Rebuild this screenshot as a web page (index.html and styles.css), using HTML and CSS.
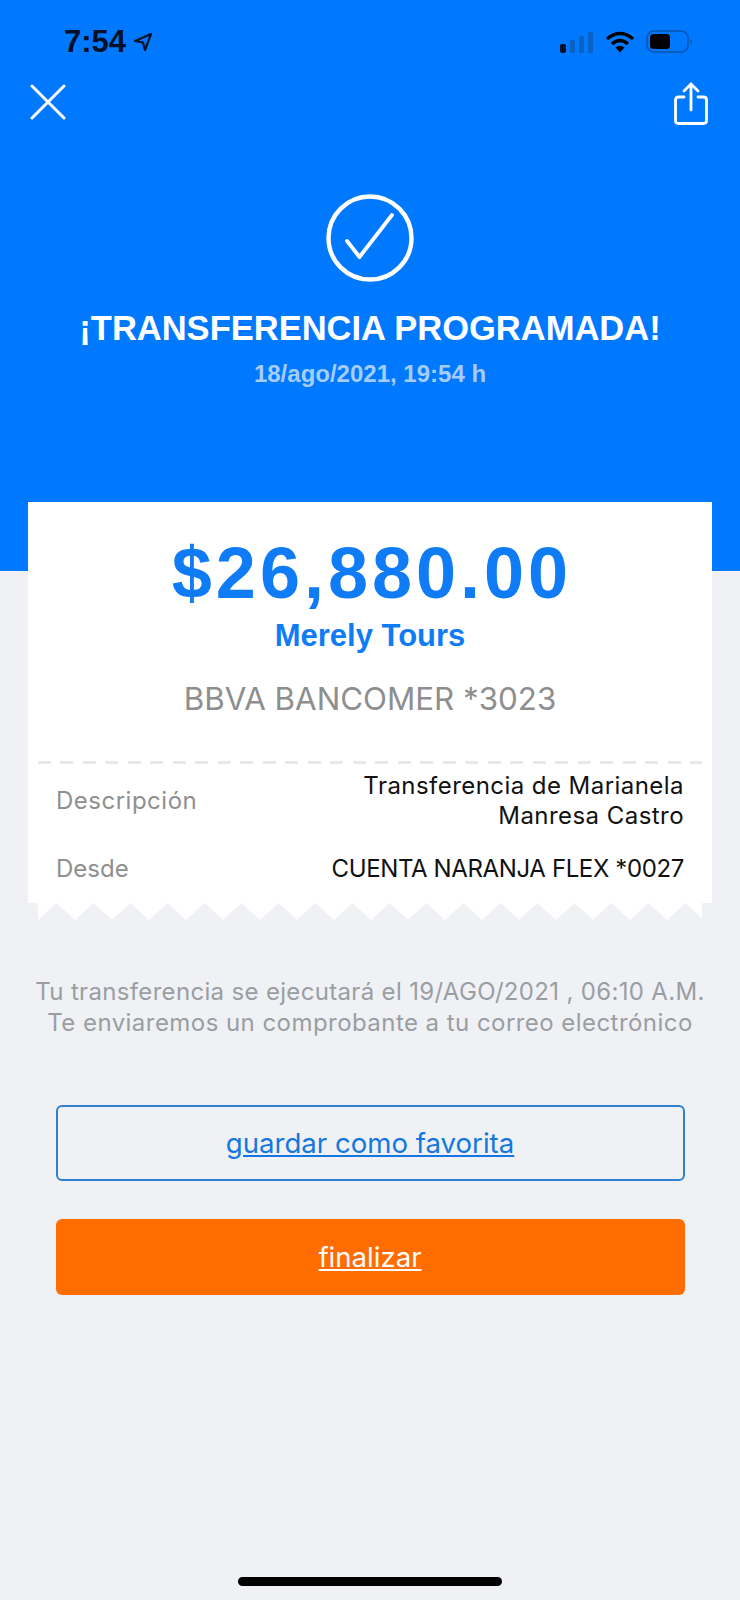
FILE: index.html
```html
<html>
  <head>
    <meta name="viewport" content="width=device-width, initial-scale=1.0">
    <link rel="stylesheet" href="styles.css">
  </head>
  <body>
    <div class="hero">
      <div class="statusBar">
        <div class="clock">
          <span>7:54</span>
          <svg class="arrowIcon" width="20" height="20" viewBox="0 0 20 20">
            <path d="M18 2 L2 9 L10 10.5 L12 18 Z" fill="none" stroke="#04102a" stroke-width="2.2" stroke-linejoin="round"/>
          </svg>
        </div>
        <div class="statusIcons">
          <svg width="34" height="22" viewBox="0 0 34 22">
            <rect x="0" y="13" width="6" height="9" rx="2" fill="#04102a"/>
            <rect x="10" y="9" width="5" height="13" rx="1.5" fill="#0a62c4"/>
            <rect x="19" y="5" width="5" height="17" rx="1.5" fill="#0a62c4"/>
            <rect x="28" y="1" width="5" height="21" rx="1.5" fill="#0a62c4"/>
          </svg>
          <svg width="30" height="22" viewBox="0 0 30 22">
            <path d="M2 8 Q15 -3 28 8" fill="none" stroke="#000" stroke-width="3.4"/>
            <path d="M7 13 Q15 6 23 13" fill="none" stroke="#000" stroke-width="3.4"/>
            <path d="M10.5 16.5 L15 21.5 L19.5 16.5 Q15 13 10.5 16.5 Z" fill="#000"/>
          </svg>
          <svg width="48" height="24" viewBox="0 0 48 24">
            <rect x="1" y="1" width="41" height="21" rx="7" fill="none" stroke="#0a55ad" stroke-width="1.6"/>
            <rect x="4" y="4" width="20" height="15" rx="3.5" fill="#000"/>
            <path d="M44.5 8.5 Q47 11.5 44.5 15 Z" fill="#0a55ad"/>
          </svg>
        </div>
      </div>

      <div class="actions">
        <svg class="closeIcon" width="36" height="36" viewBox="0 0 36 36">
          <path d="M2 2 L34 34 M34 2 L2 34" stroke="#fff" stroke-width="3" stroke-linecap="round"/>
        </svg>
        <svg width="34" height="43" viewBox="0 0 34 43">
          <path d="M10 15 H4.500 Q1.500 15 1.500 18 V38.500 Q1.500 41.500 4.500 41.500 H29.500 Q32.500 41.500 32.500 38.500 V18 Q32.500 15 29.500 15 H24" fill="none" stroke="#fff" stroke-width="2.800" stroke-linecap="round"/>
          <path d="M17 28 V2 M10 9 L17 2 L24 9" fill="none" stroke="#fff" stroke-width="2.800" stroke-linecap="round" stroke-linejoin="round"/>
        </svg>
      </div>

      <svg class="checkIcon" width="88" height="88" viewBox="0 0 88 88">
        <circle cx="44" cy="44" r="41.500" fill="none" stroke="#fff" stroke-width="4.400"/>
        <path d="M21 47 L33.500 63 L66 21" fill="none" stroke="#fff" stroke-width="3.800" stroke-linecap="round" stroke-linejoin="round"/>
      </svg>
      <h1 class="title">¡TRANSFERENCIA PROGRAMADA!</h1>
      <div class="date">18/ago/2021, 19:54 h</div>
    </div>

    <div class="card">
      <div class="amount">$26,880.00</div>
      <div class="payee">Merely Tours</div>
      <div class="bank">BBVA BANCOMER *3023</div>
      <div class="dashes"></div>
      <div class="row">
        <span class="rowLabel labelWide">Descripción</span>
        <span class="rowValue valueWide">Transferencia de Marianela<br>Manresa Castro</span>
      </div>
      <div class="row rowLast">
        <span class="rowLabel">Desde</span>
        <span class="rowValue valueCaps">CUENTA NARANJA FLEX *0027</span>
      </div>
    </div>
    <svg class="teeth" width="664" height="17" viewBox="0 0 664 17">
      <defs>
        <pattern id="tooth" width="37" height="17" patternUnits="userSpaceOnUse">
          <path d="M0 0 H37 V17 L18.500 0 L0 17 Z" fill="#fff"/>
        </pattern>
      </defs>
      <rect width="664" height="17" fill="url(#tooth)"/>
    </svg>

    <p class="notice">Tu transferencia se ejecutará el 19/AGO/2021 , 06:10 A.M.<br><span class="noticeWide">Te enviaremos un comprobante a tu correo electrónico</span></p>

    <div class="buttons">
      <a class="btn btnOutline">guardar como favorita</a>
      <a class="btn btnOrange">finalizar</a>
    </div>

    <div class="homeBar"></div>
  </body>
</html>
```

FILE: styles.css
```css
html, body {
  margin: 0;
  padding: 0;
}
body {
  width: 740px;
  height: 1600px;
  overflow: hidden;
  background-color: #eff1f5;
  font-family: "Inter", "Liberation Sans", sans-serif;
  display: flex;
  flex-direction: column;
  align-items: center;
}
.hero {
  width: 100%;
  height: 571px;
  flex-shrink: 0;
  background-color: #0079ff;
  display: flex;
  flex-direction: column;
  align-items: center;
}
.statusBar {
  width: 100%;
  box-sizing: border-box;
  padding: 27px 46px 0 64px;
  height: 82px;
  display: flex;
  justify-content: space-between;
  align-items: flex-start;
}
.clock {
  display: flex;
  align-items: center;
  gap: 7px;
  font-family: "Liberation Sans", sans-serif;
  font-weight: bold;
  font-size: 31px;
  line-height: 30px;
  color: #04102a;
}
.statusIcons {
  display: flex;
  align-items: center;
  gap: 11px;
  padding-top: 3px;
}
.actions {
  width: 100%;
  box-sizing: border-box;
  padding: 0 32px 0 30px;
  height: 112px;
  display: flex;
  justify-content: space-between;
  align-items: flex-start;
}
.closeIcon {
  margin-top: 2px;
}
.checkIcon {
  flex-shrink: 0;
}
.title {
  margin: 26px 0 0 0;
  font-family: "Liberation Sans", sans-serif;
  font-weight: bold;
  font-size: 34.500px;
  line-height: 40px;
  color: #fff;
}
.date {
  margin-top: 12px;
  font-family: "Liberation Sans", sans-serif;
  font-weight: bold;
  font-size: 24px;
  line-height: 28px;
  color: #a5cdfb;
}
.card {
  width: 684px;
  height: 401px;
  flex-shrink: 0;
  margin-top: -69px;
  background-color: #fff;
  display: flex;
  flex-direction: column;
  align-items: center;
}
.amount {
  margin-top: 28px;
  padding-left: 4px;
  font-family: "Liberation Sans", sans-serif;
  font-weight: bold;
  font-size: 72px;
  line-height: 86px;
  letter-spacing: 4px;
  color: #0f7cf6;
}
.payee {
  margin-top: 0;
  font-family: "Liberation Sans", sans-serif;
  font-weight: bold;
  font-size: 31px;
  line-height: 40px;
  color: #0f7cf6;
}
.bank {
  margin-top: 23px;
  font-size: 31.300px;
  line-height: 40px;
  color: #8e8e8e;
}
.dashes {
  align-self: stretch;
  margin: 42px 10px 0 10px;
  height: 3px;
  background-image: repeating-linear-gradient(to right, #e8e8e8 0, #e8e8e8 13px, transparent 13px, transparent 22.500px);
}
.row {
  align-self: stretch;
  margin-top: 7px;
  padding: 0 28px;
  display: flex;
  justify-content: space-between;
  align-items: center;
  font-size: 24px;
  line-height: 30px;
}
.rowLast {
  margin-top: 24px;
}
.rowLabel {
  color: #8f8f8f;
}
.labelWide {
  letter-spacing: 0.500px;
}
.rowValue {
  color: #111;
  text-align: right;
}
.valueWide {
  line-height: 29.500px;
  letter-spacing: 0.450px;
}
.valueCaps {
  letter-spacing: -0.370px;
}
.teeth {
  flex-shrink: 0;
  display: block;
}
.notice {
  margin: 56px 0 0 0;
  text-align: center;
  font-size: 24px;
  line-height: 31px;
  letter-spacing: 0.330px;
  color: #9a9ea3;
}
.noticeWide {
  letter-spacing: 0.450px;
}
.buttons {
  margin-top: 67px;
  width: 629px;
  display: flex;
  flex-direction: column;
  gap: 38px;
}
.btn {
  height: 76px;
  box-sizing: border-box;
  border-radius: 6px;
  display: flex;
  align-items: center;
  justify-content: center;
  font-size: 27.600px;
  text-decoration: underline;
}
.btnOutline {
  border: 2px solid #2f7fd0;
  color: #1477e0;
}
.btnOrange {
  background-color: #ff6c00;
  color: #fff;
}
.homeBar {
  margin-top: auto;
  margin-bottom: 14px;
  width: 264px;
  height: 9px;
  border-radius: 5px;
  background-color: #000;
}
```
